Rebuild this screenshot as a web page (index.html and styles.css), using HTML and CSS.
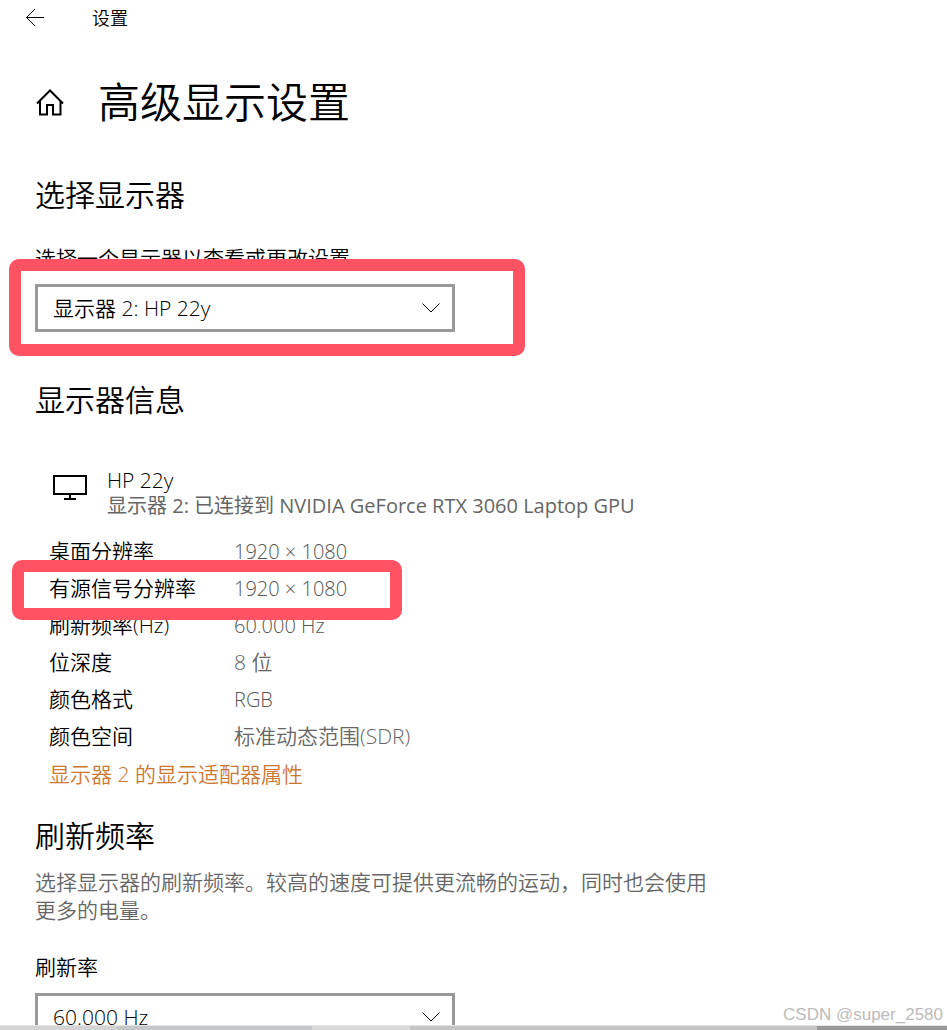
FILE: index.html
```html
<!DOCTYPE html>
<html lang="zh-CN">
<head>
<meta charset="utf-8">
<meta name="viewport" content="width=device-width, initial-scale=1">
<title>设置</title>
<link rel="stylesheet" href="styles.css">
</head>
<body>
<div class="window">
  <header class="titlebar">
    <button class="icon-button" type="button" aria-label="返回">
      <svg width="20" height="20" viewBox="0 0 20 20"><path d="M19 9.500H1.500M10 1L1.500 9.500L10 18"/></svg>
    </button>
    <span>设置</span>
  </header>
  <main class="content">
    <div class="page-title">
      <a class="home" href="#" aria-label="主页">
        <svg width="30" height="28" viewBox="0 0 30 28"><path d="M2 15.500L15 2.500L28 15.500M5 13V26.500H12V17H18V26.500H25.500V13"/></svg>
      </a>
      <h1>高级显示设置</h1>
    </div>

    <section class="choose">
      <h2>选择显示器</h2>
      <label class="label" for="display">选择一个显示器以查看或更改设置</label>
      <div class="field">
        <select id="display" class="select"><option>显示器 2: HP 22y</option></select>
        <svg class="chevron" width="18" height="10" viewBox="0 0 18 10"><path d="M.5.5L9 9L17.500.5"/></svg>
        <span class="mark mark-field"></span>
      </div>
    </section>

    <section class="info">
      <h2>显示器信息</h2>
      <div class="device">
        <svg class="monitor" width="36" height="28" viewBox="0 0 36 28"><path d="M2 2H34V20H2ZM18 20V25M12 25H24"/></svg>
        <div>
          <div class="device-name">HP 22y</div>
          <div class="device-detail">显示器 2: 已连接到 NVIDIA GeForce RTX 3060 Laptop GPU</div>
        </div>
      </div>
      <table class="specs">
        <tr><th scope="row">桌面分辨率</th><td class="numeric">1920 × 1080</td></tr>
        <tr class="marked"><th scope="row">有源信号分辨率</th><td class="numeric">1920 × 1080<span class="mark mark-row"></span></td></tr>
        <tr><th scope="row">刷新频率(Hz)</th><td class="numeric">60.000 Hz</td></tr>
        <tr><th scope="row">位深度</th><td>8 位</td></tr>
        <tr><th scope="row">颜色格式</th><td class="numeric">RGB</td></tr>
        <tr><th scope="row">颜色空间</th><td>标准动态范围(SDR)</td></tr>
      </table>
      <a class="adapter" href="#">显示器 2 的显示适配器属性</a>
    </section>

    <section class="refresh">
      <h2>刷新频率</h2>
      <p class="description">选择显示器的刷新频率。较高的速度可提供更流畅的运动，同时也会使用更多的电量。</p>
      <label class="label" for="rate">刷新率</label>
      <div class="field">
        <select id="rate" class="select"><option>60.000 Hz</option></select>
        <svg class="chevron" width="18" height="10" viewBox="0 0 18 10"><path d="M.5.5L9 9L17.500.5"/></svg>
      </div>
    </section>
  </main>
  <div class="edge"><span class="edge-light"></span><span class="edge-mid"></span><span class="edge-pale"></span><span class="edge-soft"></span><span class="edge-dark"></span></div>
  <div class="watermark">CSDN @super_2580</div>
</div>
</body>
</html>
```
FILE: styles.css
```css
* { box-sizing: border-box; }

body {
  margin: 0;
  background: #fff;
  color: #000;
  font: 350 21px/28px "Open Sans", "Noto Sans CJK SC", sans-serif;
}

.window {
  position: relative;
  display: flex;
  flex-direction: column;
  height: 100vh;
  overflow: hidden;
}

svg { display: block; fill: none; stroke: #000; }

.titlebar {
  display: flex;
  flex: none;
  align-items: center;
  gap: 47px;
  height: 36px;
  padding-left: 25px;
  font-size: 18px;
}

.icon-button {
  padding: 0;
  border: 0;
  background: none;
}

.content {
  flex: 1;
  min-height: 0;
  overflow: hidden;
  padding: 36px 35px 0;
}

.page-title {
  display: flex;
  align-items: center;
  gap: 33px;
  height: 60px;
}

.home svg { stroke-width: 2; }

h1, h2 { margin: 0; font-weight: 350; }
h1 { font-size: 42px; line-height: 60px; }
h2 { font-size: 30px; line-height: 40px; }

.choose { margin-top: 43px; }
.label { display: block; }
.choose .label { margin-top: 29px; }

.field {
  position: relative;
  max-width: 420px;
  margin-top: 12px;
}

.select {
  display: block;
  width: 100%;
  height: 48px;
  padding: 0 48px 0 15px;
  border: 3px solid #999;
  border-radius: 0;
  appearance: none;
  background: #fff;
  color: #000;
  font: inherit;
}

.chevron {
  position: absolute;
  top: 19px;
  right: 15px;
  pointer-events: none;
}

.mark {
  position: absolute;
  border: 12px solid #ff5263;
  border-radius: 10px;
  pointer-events: none;
}

.mark-field { inset: -25px -70px -24px -26px; }

.info { margin-top: 48px; }

.device {
  display: flex;
  gap: 19px;
  margin-top: 48px;
  padding-left: 17px;
  line-height: 25px;
}

.monitor { flex: none; margin-top: 6px; stroke-width: 2; }
.device-detail { font-size: 20px; font-weight: 400; }
.device-detail, .specs td, .description { color: #666; }

.specs {
  margin: 15px 0 0 14px;
  border-collapse: collapse;
}

.specs tr { height: 37px; }
.specs th { width: 185px; padding: 0; text-align: left; font-weight: 350; }
.specs th, .specs td { vertical-align: baseline; line-height: 37px; }
.specs td { padding: 0; }
.specs .numeric { color: #555; font-size: 20px; }
.specs .marked { position: relative; }
.mark-row { top: -10px; left: -37px; width: 390px; height: 60px; }

.adapter {
  display: block;
  width: fit-content;
  margin-left: 14px;
  color: #cc7832;
  line-height: 38px;
  text-decoration: none;
}

.refresh { margin-top: 23px; }
.description { max-width: 680px; margin: 12px 0 29px; }

.edge {
  display: grid;
  flex: none;
  grid-template-columns: 117fr 195fr 98fr 407fr 130fr;
  height: 5px;
  border-top: 1px solid #e4e4e4;
}

.edge-light { background: #d4d4d4; }
.edge-mid { background: #c4c7c8; }
.edge-pale { background: #d9d9d9; }
.edge-soft { background: #c4c5c4; }
.edge-dark { background: #999; }

.watermark {
  position: absolute;
  right: 4px;
  bottom: 3px;
  color: #bbb;
  font: 17px/24px "Liberation Sans", sans-serif;
}
```
